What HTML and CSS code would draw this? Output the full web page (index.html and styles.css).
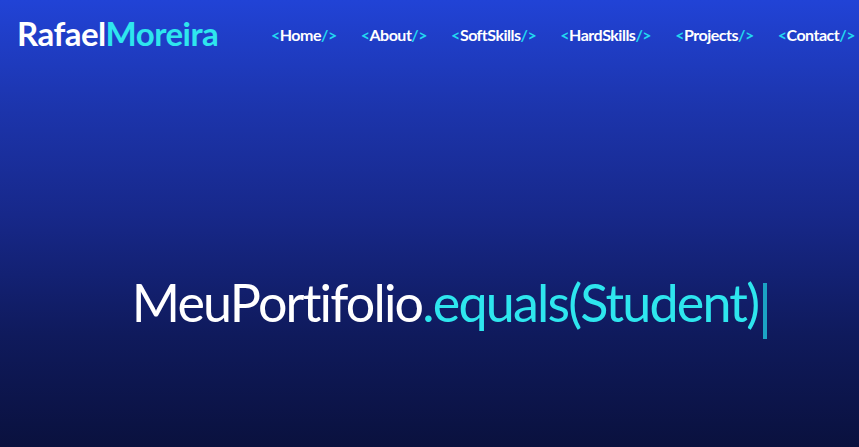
FILE: index.html
```html
<!DOCTYPE html>
<html lang="pt">
<head>
<meta charset="utf-8">
<title>Rafael Moreira</title>
<link rel="stylesheet" href="styles.css">
</head>
<body>
<div class="page">
  <header class="header">
    <div class="logo"><span class="white">Rafael</span><span class="cyan">Moreira</span></div>
    <nav class="nav">
      <a class="nav-item"><span class="br">&lt;</span>Home<span class="br">/&gt;</span></a>
      <a class="nav-item"><span class="br">&lt;</span>About<span class="br">/&gt;</span></a>
      <a class="nav-item"><span class="br">&lt;</span>SoftSkills<span class="br">/&gt;</span></a>
      <a class="nav-item"><span class="br">&lt;</span>HardSkills<span class="br">/&gt;</span></a>
      <a class="nav-item"><span class="br">&lt;</span>Projects<span class="br">/&gt;</span></a>
      <a class="nav-item"><span class="br">&lt;</span>Contact<span class="br">/&gt;</span></a>
    </nav>
  </header>
  <main class="hero">
    <h1 class="title"><span class="white">MeuPortifolio</span><span class="cyan">.equals(Student)</span><span class="cursor"></span></h1>
  </main>
</div>
</body>
</html>
```
FILE: styles.css
```css
* { box-sizing: border-box; }
html, body { margin: 0; padding: 0; }
body {
  width: 859px;
  height: 447px;
  overflow: hidden;
  font-family: Lato, "Open Sans", sans-serif;
}
.page {
  height: 447px;
  background: linear-gradient(180deg, #2143d6 0%, #1c34ab 25%, #17288a 48%, #0f1a5c 75%, #0a113e 100%);
  display: flex;
  flex-direction: column;
}
.header {
  display: flex;
  justify-content: space-between;
  align-items: center;
  height: 66px;
  padding: 0 4px 0 17px;
}
.logo {
  font-size: 33px;
  font-weight: 700;
  letter-spacing: -0.5px;
}
.white { color: #ffffff; }
.cyan { color: #2ee6ee; }
.nav {
  display: flex;
  gap: 24px;
  margin-top: 2px;
}
.nav-item {
  color: #ffffff;
  font-size: 16px;
  font-weight: 700;
  text-decoration: none;
  letter-spacing: -0.5px;
}
.br { color: #22d8f0; }
.hero {
  flex: 1;
  display: flex;
  justify-content: center;
  align-items: flex-start;
  padding: 210px 0 0 40px;
}
.title {
  margin: 0;
  font-size: 52px;
  font-weight: 400;
  letter-spacing: -1.8px;
  display: flex;
  align-items: flex-start;
  line-height: 1;
}
.cursor {
  display: inline-block;
  width: 4px;
  height: 56px;
  background: #1ba3c4;
  margin: 7px 0 0 5px;
}
```
